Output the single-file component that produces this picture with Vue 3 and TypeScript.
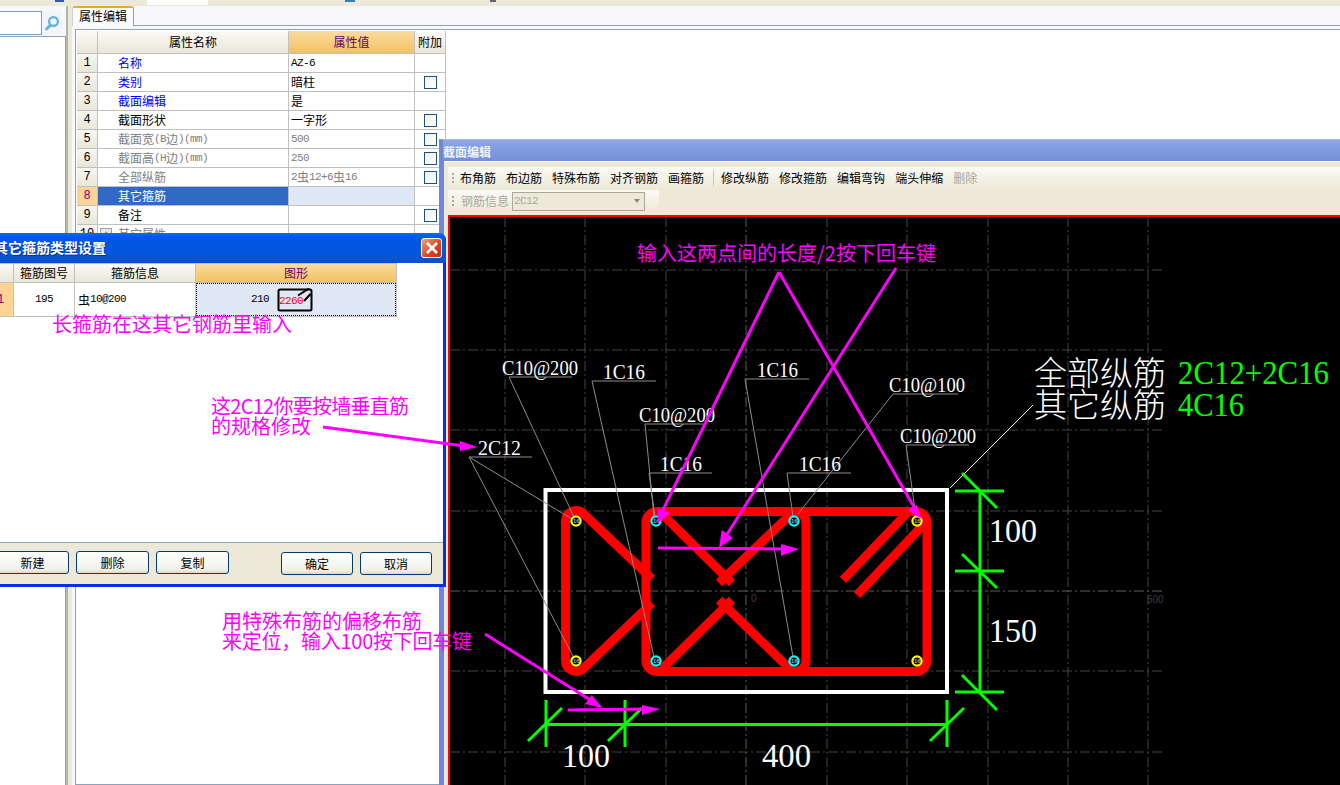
<script setup lang="ts">
interface Row { n: number; name: string; cls: string; value: string; valCls: string; check: boolean; sel?: boolean; plus?: boolean }
const rows: Row[] = [
  { n: 1, name: '名称', cls: 'blue', value: 'AZ-6', valCls: '', check: false },
  { n: 2, name: '类别', cls: 'blue', value: '暗柱', valCls: '', check: true },
  { n: 3, name: '截面编辑', cls: 'blue', value: '是', valCls: '', check: false },
  { n: 4, name: '截面形状', cls: '', value: '一字形', valCls: '', check: true },
  { n: 5, name: '截面宽(B边)(mm)', cls: 'gray', value: '500', valCls: 'gray', check: true },
  { n: 6, name: '截面高(H边)(mm)', cls: 'gray', value: '250', valCls: 'gray', check: true },
  { n: 7, name: '全部纵筋', cls: 'gray', value: '2虫12+6虫16', valCls: 'gray', check: true },
  { n: 8, name: '其它箍筋', cls: 'sel', value: '', valCls: 'selval', check: false, sel: true },
  { n: 9, name: '备注', cls: '', value: '', valCls: '', check: true },
  { n: 10, name: '其它属性', cls: 'gray', value: '', valCls: '', check: false, plus: true }
]
// Half-width runs are set in a narrower face, as the original bitmap font does.
function pieces(s: string): { t: string; lat: boolean }[] {
  return s
    .split(/([0-9A-Za-z()+@-]+)/)
    .filter((t) => t.length > 0)
    .map((t) => ({ t, lat: /^[0-9A-Za-z()+@-]+$/.test(t) }))
}
const tools = ['布角筋', '布边筋', '特殊布筋', '对齐钢筋', '画箍筋']
const tools2 = ['修改纵筋', '修改箍筋', '编辑弯钩', '端头伸缩']
const gridX = [505, 585, 666, 827, 907, 988, 1068, 1148]
const gridY = [270, 350, 430, 511, 671, 752]
const labels = [
  { t: 'C10@200', x: 502, y: 375, w: 76 },
  { t: '1C16', x: 603, y: 379, w: 42 },
  { t: '1C16', x: 757, y: 377, w: 41 },
  { t: 'C10@100', x: 889, y: 392, w: 76 },
  { t: 'C10@200', x: 639, y: 422, w: 76 },
  { t: '1C16', x: 660, y: 471, w: 42 },
  { t: '1C16', x: 799, y: 471, w: 42 },
  { t: 'C10@200', x: 900, y: 443, w: 76 },
  { t: '2C12', x: 478, y: 455, w: 43 }
]
const leaders = [
  'M572 377H509L574 517',
  'M656 381H592L654 657',
  'M809 379H745L793 657',
  'M703 424H645L654 517',
  'M712 473H649L655 517',
  'M851 473H787L793 517',
  'M958 394H893L798 514',
  'M969 445H906L916 517',
  'M532 457H469L572 519',
  'M469 457L574 658'
]
const dots = [
  { x: 576, y: 521, c: '#ffff00' },
  { x: 576, y: 661, c: '#ffff00' },
  { x: 917, y: 521, c: '#ffff00' },
  { x: 917, y: 661, c: '#ffff00' },
  { x: 656, y: 521, c: '#00ffff' },
  { x: 794, y: 521, c: '#00ffff' },
  { x: 656, y: 661, c: '#00ffff' },
  { x: 794, y: 661, c: '#00ffff' }
]
const redPaths = [
  'M652 579L583.4 513.6A10.5 10.5 0 0 0 565.6 521V661A10.5 10.5 0 0 0 583.4 668.4L652 603',
  'M660 512L732 583',
  'M792 513L719 583',
  'M662 669L732 600',
  'M790 669L719 600',
  'M795 511.5A11 11 0 0 1 806 522.5V660.5A11 11 0 0 1 795 671.5',
  'M908 512L843 580',
  'M924 524L857 595'
]
const greenPaths = [
  'M980 490V692', 'M955 491H1004', 'M955 571H1004', 'M955 692H1004',
  'M962 473L997 508', 'M962 554L997 588', 'M962 675L997 710',
  'M546 724.5H947', 'M546 700V747', 'M625 700V747', 'M947 700V747',
  'M528 741L562 708', 'M608 741L642 708', 'M930 741L964 708'
]
const arrowLines = [
  'M779 272L660 516', 'M779 272L918 514', 'M896 268L726 536', 'M658 548L785 549',
  'M323 427L464 446', 'M485 634L592 701', 'M568 710L645 709'
]
const arrowHeads = [
  '657.7,523.3 657.7,508.3 670,513.3',
  '921.7,519 907.7,510 916.7,505',
  '719,548 721.7,530 733,538',
  '799,549 781,544 781,556',
  '477.6,447 460,441 460,451',
  '602.7,708 591.7,695 585,704',
  '660,709 642,705 642,715'
]
</script>

<template>
  <div class="page">
    <div class="topbar">
      <i class="tb-blue"></i><i class="tb-white"></i><i class="tb-green"></i><i class="tb-grey"></i>
    </div>

    <div class="workspace">
      <aside class="left">
        <div class="search">
          <div class="search-input"></div>
          <div class="search-btn">
            <svg width="16" height="16" viewBox="0 0 16 16">
              <circle cx="9.5" cy="6.5" r="4.4" fill="none" stroke="#62ade6" stroke-width="2.2" />
              <path d="M6.5 10L2.5 14" stroke="#62ade6" stroke-width="2.6" stroke-linecap="round" />
            </svg>
          </div>
        </div>
        <div class="left-body"></div>
      </aside>
      <div class="splitter"></div>

      <main class="main">
        <div class="tabstrip"><div class="tab">属性编辑</div></div>
        <div class="frame">
          <div class="grid">
            <div class="hd"></div>
            <div class="hd">属性名称</div>
            <div class="hd hd-active">属性值</div>
            <div class="hd">附加</div>
            <template v-for="r in rows" :key="r.n">
              <div class="num" :class="{ 'num-sel': r.sel }">{{ r.n }}</div>
              <div class="name" :class="r.cls">
                <span v-if="r.plus" class="plus">+</span>
                <span v-for="(p, i) in pieces(r.name)" :key="i" :class="{ lat: p.lat }">{{ p.t }}</span>
              </div>
              <div class="val" :class="r.valCls">
                <span v-for="(p, i) in pieces(r.value)" :key="i" :class="{ lat: p.lat }">{{ p.t }}</span>
              </div>
              <div class="chk"><span v-if="r.check" class="box"></span></div>
            </template>
          </div>
        </div>
      </main>
    </div>

    <section class="editor">
      <div class="ed-title">截面编辑</div>
      <div class="ed-body">
        <div class="toolbar tb1">
          <span class="grip"></span>
          <span v-for="t in tools" :key="t" class="tool">{{ t }}</span>
          <span class="sep"></span>
          <span v-for="t in tools2" :key="t" class="tool">{{ t }}</span>
          <span class="tool off">删除</span>
        </div>
        <div class="toolbar tb2">
          <span class="grip"></span>
          <span class="tool off">钢筋信息</span>
          <div class="combo"><span>2C12</span><i class="caret"></i></div>
        </div>
        <div class="canvas">
          <svg class="cad" width="890" height="568" viewBox="450 217 890 568">
            <g class="gridlines">
              <path v-for="x in gridX" :key="'x' + x" :d="`M${x} 217V785`" />
              <path v-for="y in gridY" :key="'y' + y" :d="`M450 ${y}H1162`" />
            </g>
            <g class="gridlines centre">
              <path d="M746 217V785" />
              <path d="M450 591H1162" />
            </g>
            <text class="tick" x="751" y="602">0</text>
            <text class="tick" x="1147" y="603">500</text>

            <rect x="545.5" y="490" width="401.5" height="202" fill="none" stroke="#fff" stroke-width="4" />

            <g fill="none" stroke="#ff0000" stroke-width="9">
              <rect x="646" y="511.5" width="281" height="160" rx="11" />
              <path v-for="(d, i) in redPaths" :key="i" :d="d" />
            </g>

            <g fill="none" stroke="#8c8c8c" stroke-width="1">
              <path v-for="(d, i) in leaders" :key="i" :d="d" />
            </g>
            <path d="M950 488L1033 405" stroke="#fff" stroke-width="1" />

            <g v-for="(d, i) in dots" :key="'d' + i">
              <circle :cx="d.x" :cy="d.y" r="4.6" fill="#000" :stroke="d.c" stroke-width="2.2" />
              <text class="mini" :x="d.x - 3" :y="d.y + 2">16</text>
            </g>

            <g fill="none" stroke="#00ff00" stroke-width="3">
              <path v-for="(d, i) in greenPaths" :key="i" :d="d" />
            </g>

            <text v-for="(l, i) in labels" :key="'l' + i" class="lab" :x="l.x" :y="l.y"
              :textLength="l.w" lengthAdjust="spacingAndGlyphs">{{ l.t }}</text>

            <text class="big-cjk" x="1034" y="385">全部纵筋</text>
            <text class="big-cjk" x="1034" y="417">其它纵筋</text>
            <text class="big green" x="1178" y="384" textLength="151" lengthAdjust="spacingAndGlyphs">2C12+2C16</text>
            <text class="big green" x="1178" y="416" textLength="66" lengthAdjust="spacingAndGlyphs">4C16</text>
            <text class="big" x="989" y="542" textLength="48" lengthAdjust="spacingAndGlyphs">100</text>
            <text class="big" x="989" y="642" textLength="48" lengthAdjust="spacingAndGlyphs">150</text>
            <text class="big" x="562" y="767" textLength="48" lengthAdjust="spacingAndGlyphs">100</text>
            <text class="big" x="762" y="767" textLength="49" lengthAdjust="spacingAndGlyphs">400</text>
          </svg>
        </div>
      </div>
    </section>

    <section class="dialog">
      <header class="dlg-title">
        <span class="dlg-text">其它箍筋类型设置</span>
        <button class="close" type="button">
          <svg width="14" height="14" viewBox="0 0 14 14">
            <path d="M2 2L12 12M12 2L2 12" stroke="#fff" stroke-width="2.6" />
          </svg>
        </button>
      </header>
      <div class="dlg-body">
        <div class="dgrid">
          <div class="hd"></div>
          <div class="hd">箍筋图号</div>
          <div class="hd">箍筋信息</div>
          <div class="hd hd-active">图形</div>
          <div class="num num-sel">1</div>
          <div class="dcell center"><span class="lat">195</span></div>
          <div class="dcell">
            <span v-for="(p, i) in pieces('虫10@200')" :key="i" :class="{ lat: p.lat }">{{ p.t }}</span>
          </div>
          <div class="dcell shape">
            <span class="lat">210</span>
            <span class="shape-icon">
              <svg width="36" height="24" viewBox="0 0 36 24">
                <rect x="1.5" y="1.5" width="33" height="21" rx="1.5" fill="none" stroke="#000" stroke-width="2" />
                <path d="M21 7.5L32 0.5M27 13L33.5 6" stroke="#000" stroke-width="2" fill="none" />
              </svg>
              <em>2260</em>
            </span>
          </div>
        </div>
      </div>
      <footer class="dlg-foot">
        <div class="btns">
          <button class="btn" type="button">新建</button>
          <button class="btn" type="button">删除</button>
          <button class="btn" type="button">复制</button>
        </div>
        <div class="btns btns-right">
          <button class="btn" type="button">确定</button>
          <button class="btn" type="button">取消</button>
        </div>
      </footer>
    </section>

    <svg class="overlay" width="1340" height="785" viewBox="0 0 1340 785">
      <g fill="none" stroke="#ff00ff" stroke-width="3">
        <path v-for="(d, i) in arrowLines" :key="i" :d="d" />
      </g>
      <polygon v-for="(p, i) in arrowHeads" :key="'h' + i" :points="p" fill="#ff00ff" />
      <g class="note">
        <text x="637" y="261">输入这两点间的长度/2按下回车键</text>
        <text x="52" y="332">长箍筋在这其它钢筋里输入</text>
        <text x="211" y="414" textLength="198">这2C12你要按墙垂直筋</text>
        <text x="211" y="434">的规格修改</text>
        <text x="222" y="629">用特殊布筋的偏移布筋</text>
        <text x="222" y="649" textLength="250">来定位，输入100按下回车键</text>
      </g>
    </svg>
  </div>
</template>

<style>
html, body { margin: 0; padding: 0; overflow: hidden; background: #fff; }
</style>

<style scoped>
.page {
  position: relative;
  width: 1340px;
  height: 785px;
  overflow: hidden;
  background: #f8f8fb;
  font: 12px/1 "Noto Sans CJK SC", "Liberation Sans", sans-serif;
  color: #000;
}
.lat {
  font-family: "Liberation Mono", monospace;
  font-size: 11px;
  letter-spacing: -0.6px;
}
.topbar { display: flex; height: 6px; background: #ece9d8; align-items: flex-start; }
.topbar i { display: block; height: 2px; }
.tb-blue { width: 9px; margin-left: 55px; background: #2a5db0; }
.tb-white { width: 61px; margin-left: 83px; height: 5px !important; background: #fff; }
.tb-green { width: 10px; margin-left: 137px; background: #3a80c0; }
.tb-grey { width: 6px; margin-left: 135px; background: #666; }

.workspace { display: flex; height: 779px; }
.left { width: 66px; display: flex; flex-direction: column; }
.search { display: flex; height: 31px; padding-top: 5px; box-sizing: border-box; border-bottom: 1px solid #8ca3be; }
.search-input { width: 41px; height: 22px; background: #fff; border: 1px solid #7f9db9; border-left: 0; }
.search-btn { width: 20px; height: 24px; display: flex; align-items: center; justify-content: center; background: #f1f4f8; }
.left-body { flex: 1; background: #fff; border-right: 1px solid #8ca3be; }
.splitter {
  width: 6px;
  box-sizing: border-box;
  border-left: 2px solid #b2b5ae;
  background: #ece9d8;
}
.main { flex: 1; display: flex; flex-direction: column; }
.tabstrip { height: 19px; border-bottom: 1px solid #8ca3be; display: flex; }
.tab {
  width: 62px;
  height: 20px;
  box-sizing: border-box;
  border-top: 2px solid #f5a623;
  border-right: 1px solid #8ca3be;
  border-left: 1px solid #c8cfd8;
  border-radius: 3px 3px 0 0;
  background: #fbfbfe;
  text-align: center;
  line-height: 16px;
}
.frame {
  flex: 1;
  margin: 3px 0 0 3px;
  padding: 1px;
  border: 1px solid #8ca3be;
  border-right: 0;
  background: #fff;
}
.grid {
  display: inline-grid;
  grid-template-columns: 20px 190px 125px 30px;
  grid-template-rows: 22px repeat(10, 18px);
  gap: 1px;
  background: #c0c0c0;
  border-bottom: 1px solid #c0c0c0;
  border-right: 1px solid #c0c0c0;
}
.hd {
  display: flex;
  align-items: center;
  justify-content: center;
  background: linear-gradient(#fbfaf6, #e9e6d9);
}
.hd-active { background: linear-gradient(#fbdc9c, #f2c065); color: #660066; }
.num {
  display: flex;
  align-items: center;
  justify-content: center;
  background: linear-gradient(#f8f7f1, #e9e6d9);
  font: 12px "Liberation Mono", monospace;
}
.num-sel { background: #fdd495; color: #800080; }
.name { display: flex; align-items: center; padding-left: 20px; background: #fff; position: relative; }
.name.blue { color: #0000ff; }
.name.gray { color: #808080; }
.name.sel { background: #316ac5; color: #fff; }
.plus {
  position: absolute;
  left: 2px;
  top: 3px;
  width: 12px;
  height: 12px;
  box-sizing: border-box;
  border: 1px solid #a0a0a0;
  background: #e8e8e0;
  font-size: 10px;
  line-height: 10px;
  text-align: center;
  color: #000;
}
.val { display: flex; align-items: center; padding-left: 2px; background: #fff; }
.val.gray { color: #808080; }
.val.selval { background: #e0e8f5; }
.chk { display: flex; align-items: center; justify-content: center; background: #fff; }
.box {
  width: 13px;
  height: 13px;
  box-sizing: border-box;
  border: 1px solid #1c5180;
  background: linear-gradient(135deg, #f1efe6, #fff);
}

.editor {
  position: absolute;
  left: 439px;
  top: 139px;
  right: 0;
  bottom: 0;
  display: flex;
  flex-direction: column;
  box-sizing: border-box;
  border-left: 5px solid #7186d4;
  border-top: 1px solid #a6bbe8;
  background: #7186d4;
  z-index: 1;
}
.ed-title {
  height: 21px;
  margin-left: -1px;
  background: linear-gradient(#8ea6e4, #7490dc);
  color: #f0f4ff;
  font-weight: 700;
  line-height: 23px;
}
.ed-body {
  flex: 1;
  display: flex;
  flex-direction: column;
  background: #ece9d8;
  border-top: 1px solid #fff;
  padding: 5px 0 0 4px;
  min-height: 0;
}
.toolbar { display: flex; align-items: center; background: linear-gradient(#fbfaf5, #ece9d8); }
.tb1 { height: 22px; gap: 10px; padding-left: 12px; position: relative; }
.tb2 { height: 22px; margin-top: 1px; width: 198px; padding-left: 13px; position: relative; }
.grip {
  position: absolute;
  left: 4px;
  top: 6px;
  width: 2px;
  height: 10px;
  background: repeating-linear-gradient(#a8a8a0 0 2px, transparent 2px 4px);
}
.tool { white-space: nowrap; }
.off { color: #a9a89b; }
.sep { width: 1px; height: 16px; background: #c8c8bc; margin: 0 -3px 0 -1px; }
.combo {
  width: 133px;
  height: 19px;
  margin-left: 3px;
  box-sizing: border-box;
  border: 1px solid #a9a89b;
  background: #ece9d8;
  display: flex;
  align-items: center;
  justify-content: space-between;
  padding: 0 4px 0 1px;
  color: #a9a89b;
  font: 11px "Liberation Mono", monospace;
  letter-spacing: -0.6px;
}
.caret { width: 0; height: 0; border: 3px solid transparent; border-top: 4px solid #888; border-bottom: 0; }
.canvas {
  flex: 1;
  margin-top: 3px;
  border-top: 2px solid #ff0000;
  border-left: 2px solid #ff0000;
  background: #000;
  overflow: hidden;
  min-height: 0;
}
.cad { display: block; }
.gridlines path { fill: none; stroke: #444; stroke-width: 1; stroke-dasharray: 10 3 2 3; }
.gridlines.centre path { stroke: #5e5e5e; }
.tick { fill: #3c3c3c; font: 10px "Liberation Sans", sans-serif; }
.mini { fill: #aaa; font: 700 6px "Liberation Sans", sans-serif; }
.lab { fill: #fff; font: 20px "Liberation Serif", serif; }
.big { fill: #fff; font: 33px "Liberation Serif", serif; }
.big.green { fill: #00ff00; }
.big-cjk { fill: #fff; font: 300 33px "Noto Sans CJK SC", sans-serif; }

.dialog {
  position: absolute;
  left: -12px;
  top: 233px;
  width: 458px;
  height: 354px;
  display: flex;
  flex-direction: column;
  box-sizing: border-box;
  border: solid #0831d9;
  border-width: 0 3px 3px 3px;
  border-radius: 7px 7px 0 0;
  background: #ece9d8;
  z-index: 2;
}
.dlg-title {
  height: 30px;
  margin: 0 -3px;
  display: flex;
  align-items: center;
  justify-content: space-between;
  padding: 0 4px 0 6px;
  border-radius: 7px 7px 0 0;
  background: linear-gradient(#0a6af0, #0058e6 12%, #0255dd 70%, #0a4fcf);
  color: #fff;
  font-size: 14px;
  font-weight: 700;
  text-shadow: 1px 1px 0 #0a2f90;
  flex: none;
}
.dlg-text { padding-bottom: 2px; }
.close {
  width: 21px;
  height: 20px;
  padding: 0;
  display: flex;
  align-items: center;
  justify-content: center;
  border: 1px solid #fff;
  border-radius: 3px;
  background: linear-gradient(135deg, #f0a080, #d8431a 60%, #c23010);
}
.dlg-body { flex: 1; background: #fff; border-bottom: 1px solid #8ca3be; }
.dgrid {
  display: inline-grid;
  margin-left: -3px;
  grid-template-columns: 25px 60px 120px 200px;
  grid-template-rows: 18px 33px;
  gap: 1px;
  padding-top: 1px;
  background: #c0c0c0;
  border-bottom: 1px solid #c0c0c0;
  border-right: 1px solid #c0c0c0;
}
.dcell { display: flex; align-items: center; padding-left: 3px; background: #fff; }
.dcell.center { justify-content: center; padding-left: 0; }
.shape {
  background: #e0e8f5;
  outline: 1px dotted #000;
  outline-offset: -1px;
  padding-left: 55px;
  gap: 8px;
}
.shape-icon { position: relative; display: block; width: 36px; height: 24px; }
.shape-icon svg { display: block; }
.shape-icon em {
  position: absolute;
  left: 2px;
  top: 8px;
  font: 11px/1 "Liberation Mono", monospace;
  letter-spacing: -0.6px;
  color: #ff0000;
}
.dlg-foot { height: 41px; flex: none; display: flex; justify-content: space-between; padding: 8px 11px 0 5px; box-sizing: border-box; }
.btns { display: flex; gap: 7px; }
.btns-right { padding-top: 1px; }
.btn {
  width: 73px;
  height: 23px;
  padding: 0;
  box-sizing: border-box;
  border: 1px solid #003c74;
  border-radius: 3px;
  background: linear-gradient(#fff, #f0f0ea 85%, #dcd8c8);
  font: inherit;
  color: #000;
}
.btns-right .btn { width: 72px; }

.overlay { position: absolute; left: 0; top: 0; z-index: 3; pointer-events: none; }
.note text { fill: #ff00ff; font: 20px "Noto Sans CJK SC", sans-serif; }
</style>
